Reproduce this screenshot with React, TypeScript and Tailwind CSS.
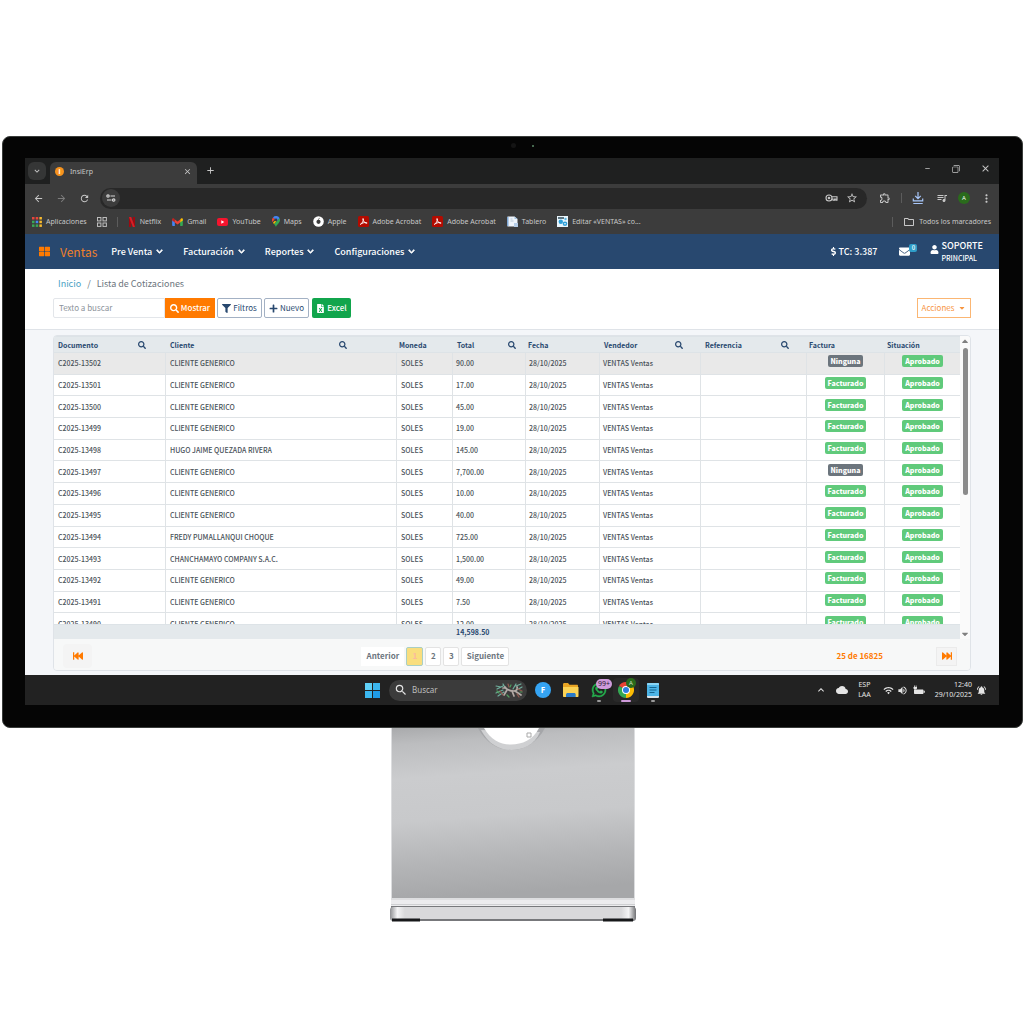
import type { ReactNode } from "react";
import {
  FaSearch,
  FaFilter,
  FaPlus,
  FaFileExcel,
  FaEnvelope,
  FaUser,
  FaDollarSign,
  FaChevronDown,
  FaFastBackward,
  FaFastForward,
  FaThLarge,
  FaCaretDown,
  FaCaretUp,
  FaWhatsapp,
} from "react-icons/fa";
import {
  MdArrowBack,
  MdArrowForward,
  MdRefresh,
  MdStarBorder,
  MdOutlineExtension,
  MdQueueMusic,
  MdMoreVert,
  MdClose,
  MdAdd,
  MdExpandMore,
  MdExpandLess,
  MdMinimize,
  MdWifi,
  MdVolumeUp,
  MdCloud,
  MdNotificationsActive,
  MdOutlineFolder,
  MdSearch,
  MdOutlineFilterNone,
} from "react-icons/md";

const AppsIcon = () => (
  <svg viewBox="0 0 10 10" className="h-[10px] w-[10px]">
    {["#e8453c", "#e8453c", "#f9bb2d", "#3aa757", "#4688f1", "#f9bb2d", "#3aa757", "#3aa757", "#f9bb2d"].map(
      (fill, i) => (
        <rect key={i} x={(i % 3) * 3.700} y={Math.floor(i / 3) * 3.700} width="2.500" height="2.500" fill={fill} />
      )
    )}
  </svg>
);

const GridIcon = () => (
  <svg viewBox="0 0 10 10" className="h-[10px] w-[10px]" fill="none" stroke="#bdbdbd">
    <rect x="0.5" y="0.5" width="3.4" height="3.4" />
    <rect x="6" y="0.5" width="3.4" height="3.4" />
    <rect x="0.5" y="6" width="3.4" height="3.4" />
    <rect x="6" y="6" width="3.4" height="3.4" />
  </svg>
);

const NetflixIcon = () => (
  <svg viewBox="0 0 8 10" className="h-[10px] w-2">
    <path d="M1 0h2.200v10l-2.200.2zM4.800 0H7v10.200L4.800 10z" fill="#9d0a11" />
    <path d="M1 0h2.200L7 10.200 4.800 10z" fill="#d81f26" />
  </svg>
);

const GmailIcon = () => (
  <svg viewBox="0 0 12 9" className="h-2 w-[11px]">
    <path d="M0 1.500v6.700c0 .4.300.8.800.8H3V4z" fill="#4285f4" />
    <path d="M12 1.500v6.700c0 .4-.300.8-.800.8H9V4z" fill="#34a853" />
    <path d="M0 1.300v1.400L3 5V1.700L2 .5C1.200-.1 0 .3 0 1.300z" fill="#c5221f" />
    <path d="M12 1.300v1.400L9 5V1.700L10 .5c.8-.6 2-.2 2 .8z" fill="#fbbc04" />
    <path d="M3 1.700l3 2.300 3-2.300V5L6 7.300 3 5z" fill="#ea4335" />
  </svg>
);

const YoutubeIcon = () => (
  <svg viewBox="0 0 11 8" className="h-2 w-[11px]">
    <rect width="11" height="8" rx="2" fill="#f5142d" />
    <path d="M4.300 2.200v3.600L7.300 4z" fill="#fff" />
  </svg>
);

const MapsIcon = () => (
  <svg viewBox="0 0 8 11" className="h-[11px] w-2">
    <path d="M4 11c0-2 4-4 4-7a4 4 0 0 0-.5-2L2 8c1 1 1.500 2 2 3z" fill="#34a853" />
    <path d="M.500 6L3 3 1 1.400A4 4 0 0 0 .5 6z" fill="#ea4335" />
    <path d="M1 6.800L5.500 2 4 5.600 2 8z" fill="#fbbc04" />
    <path d="M1 1.400A4 4 0 0 1 7.500 2L5 5 3 3z" fill="#4285f4" />
    <circle cx="4" cy="3.900" r="1.400" fill="#3c3c3c" />
  </svg>
);

const AppleIcon = () => (
  <svg viewBox="0 0 11 11" className="h-[11px] w-[11px]">
    <circle cx="5.500" cy="5.500" r="5.300" fill="#fff" />
    <circle cx="5.500" cy="5.800" r="2.100" fill="#3c3c3c" />
    <path d="M5.300 3.800q.2-1.400 1.400-1.500" stroke="#3c3c3c" fill="none" strokeWidth=".7" />
  </svg>
);

const AcrobatIcon = () => (
  <svg viewBox="0 0 11 11" className="h-[11px] w-[11px]">
    <rect width="11" height="11" rx="1.500" fill="#b30b00" />
    <path
      d="M2.300 8.400c1.800-1 3.400-3.600 3.100-5.400-.2-.8-.9-.5-.6.400.5 1.800 1.900 3.500 3.800 4 .8 0 .5-.9-.3-.9-2.200-.100-4 .5-6 1.900z"
      fill="none"
      stroke="#fff"
      strokeWidth=".9"
    />
  </svg>
);

const BoardIcon = () => (
  <svg viewBox="0 0 11 11" className="h-[11px] w-[11px]">
    <path d="M.500.500h7L10.500 3v7.500H.5z" fill="#eef4fb" />
    <path d="M7.500.500V3h3z" fill="#9fbfe0" />
    <path d="M0 1h1.500v9H0z" fill="#7ea6d3" />
    <path d="M3.500 3h2M3.500 5h3" stroke="#a9bccf" strokeWidth=".8" />
    <path d="M7 7h4v4H7z" fill="#b5cde8" />
  </svg>
);

const EditIcon = () => (
  <svg viewBox="0 0 11 11" className="h-[11px] w-[11px]">
    <rect width="11" height="11" fill="#e9f5fc" />
    <path d="M1 1h6v2H1z" fill="#5d7480" />
    <circle cx="3.800" cy="5.800" r="2.200" fill="#2d9fd8" />
    <circle cx="8" cy="7.800" r="2.300" fill="#2d9fd8" />
    <circle cx="8.500" cy="3" r="1.200" fill="#57b5e2" />
    <circle cx="8" cy="7.800" r=".8" fill="#fff" />
  </svg>
);

const TuneIcon = () => (
  <svg viewBox="0 0 10 8" className="h-2 w-[10px]" fill="none" stroke="#d5d5d5" strokeWidth="1.200">
    <circle cx="2" cy="2" r="1.200" />
    <path d="M4.500 2H9M1 6h4.500" />
    <circle cx="7.700" cy="6" r="1.200" />
  </svg>
);

const KeyIcon = () => (
  <svg viewBox="0 0 13 8" className="h-2 w-[13px]" fill="none" stroke="currentColor" strokeWidth="1.100">
    <circle cx="4" cy="4" r="3" />
    <circle cx="4" cy="4" r=".8" fill="currentColor" />
    <path d="M7 2.800h5v3.400h-1.200V5H9.500v1.200H8V5H7" />
  </svg>
);

const DownloadIcon = () => (
  <svg viewBox="0 0 12 14" className="h-[14px] w-3" fill="none" stroke="#a8c7fa" strokeWidth="1.200">
    <path d="M6 1v6.500M3.200 4.800L6 7.600l2.800-2.800M1.300 7.500v2.300h9.400V7.500M1.300 12.500h9.400" />
  </svg>
);

const BatteryIcon = () => (
  <svg viewBox="0 0 12 10" className="h-[10px] w-3" fill="currentColor">
    <path d="M1 4.500h8.500c.6 0 1 .4 1 1V8c0 .6-.4 1-1 1H2c-.6 0-1-.4-1-1zM10.800 5.800h1v2h-1z" />
    <path d="M.500 2h3.500v1.500L3 4.500H1.500L.5 3.500zM1 .500h.8V2H1zM2.700.500h.8V2h-.8z" />
  </svg>
);

const WindowsIcon = () => (
  <svg viewBox="0 0 15 15" className="h-[15px] w-[15px]">
    <path d="M0 0h7v7H0z" fill="#5fd0f7" />
    <path d="M8 0h7v7H8z" fill="#3bb7f0" />
    <path d="M0 8h7v7H0z" fill="#3bb7f0" />
    <path d="M8 8h7v7H8z" fill="#1f9ce8" />
  </svg>
);

const LizardIcon = () => (
  <svg viewBox="0 0 28 16" className="h-4 w-7" fill="none" strokeLinecap="round">
    <path d="M1 4l5 1M2 7l6-3M1 11l7-3M3 14l6-4M8 2l3 5M18 7l3-5M20 9l7-4M21 4l5-2" stroke="#6fae9c" strokeWidth="1.200" />
    <path d="M10 5c2 3 5 4 9 4 2 0 4-2 3-4M12 8l-3 5M17 9l2 5M20 9l6 4M11 6L8 6" stroke="#b3aaa6" strokeWidth="1.700" />
    <path d="M5 9l3 4M23 7l4 2M13 2l1 3M22 12l2 3" stroke="#94594f" strokeWidth="1.200" />
    <path d="M2 9l2 2M12 13l2 2M16 3l-1 2M25 10l2 0" stroke="#4f9e5e" strokeWidth="1.200" />
  </svg>
);

const FolderIcon = () => (
  <svg viewBox="0 0 16 14" className="h-[14px] w-4">
    <path d="M0 1.500C0 .7.500 0 1.300 0H5l1.500 1.800H14c.6 0 1 .5 1 1V12H0z" fill="#e9a524" />
    <path d="M0 4h15.500v9c0 .6-.4 1-1 1H1c-.6 0-1-.4-1-1z" fill="#fbd356" />
    <path d="M3 14v-2.500C3 10.500 4 10 4.700 10h6.300c1 0 1.700.5 1.700 1.500V14z" fill="#2b7bc8" />
  </svg>
);

const ChromeIcon = () => (
  <svg viewBox="0 0 16 16" className="h-4 w-4">
    <path d="M8 8L1.070 4A8 8 0 0 1 14.930 4z" fill="#ea4335" />
    <path d="M8 8L14.930 4A8 8 0 0 1 8 16z" fill="#fbbc04" />
    <path d="M8 8L8 16A8 8 0 0 1 1.070 4z" fill="#34a853" />
    <circle cx="8" cy="8" r="4" fill="#fff" />
    <circle cx="8" cy="8" r="3" fill="#2f7de1" />
  </svg>
);

const NotepadIcon = () => (
  <svg viewBox="0 0 12 15" className="h-[15px] w-3">
    <rect width="12" height="14" rx="1" fill="#4cb4e6" />
    <path d="M0 1a1 1 0 0 1 1-1h10a1 1 0 0 1 1 1v1H0z" fill="#8ad5f5" />
    <path d="M2.500 4.500h7M2.500 7h7M2.500 9.500h5" stroke="#14648f" />
    <path d="M0 13h12v1a1 1 0 0 1-1 1H1a1 1 0 0 1-1-1z" fill="#d8e2e8" />
  </svg>
);

const Stand = () => (
  <svg viewBox="0 0 246 194" className="h-[194px] w-[246px]">
    <defs>
      <linearGradient id="metal" x1="0" y1="0" x2="0.100" y2="1">
        <stop offset="0" stopColor="#a9aaac" />
        <stop offset="0.100" stopColor="#bcbdbf" />
        <stop offset="0.300" stopColor="#cbccce" />
        <stop offset="0.550" stopColor="#c8c9cb" />
        <stop offset="0.800" stopColor="#b4b5b7" />
        <stop offset="1" stopColor="#a6a7a9" />
      </linearGradient>
      <linearGradient id="foot" x1="0" y1="0" x2="1" y2="0">
        <stop offset="0" stopColor="#8f9093" />
        <stop offset="0.030" stopColor="#f4f4f5" />
        <stop offset="0.060" stopColor="#d9d9db" />
        <stop offset="0.940" stopColor="#d9d9db" />
        <stop offset="0.970" stopColor="#f4f4f5" />
        <stop offset="1" stopColor="#6f7073" />
      </linearGradient>
    </defs>
    <path d="M1 0h244v171H1z" fill="url(#metal)" />
    <path d="M1.500 0v171M244.500 0v171" stroke="#dcdddf" />
    <path d="M88 0C96 15 108 22 121 22S147 15 155 0z" fill="#a5a6a9" />
    <path d="M91 2C99 17 110 22 121 22S145 17 150 4z" fill="#cfd0d2" />
    <path d="M94 0C101 12 110 16.500 121 16.500S143 12 149 0z" fill="#fff" />
    <path d="M137 5h4v4h-4z" fill="none" stroke="#a9a9a9" />
    <path d="M1 170h244v8H1z" fill="#ececee" />
    <path d="M1 171h244M1 176.500h244" stroke="#cfd0d2" />
    <path d="M1 178h244v2H1z" fill="#77787b" />
    <rect y="179" width="246" height="14" rx="3" fill="url(#foot)" />
    <path d="M2 192h242" stroke="#77787b" strokeWidth="2" />
    <path d="M2 192h28M213 192h30" stroke="#17181a" strokeWidth="3" />
  </svg>
);

const bookmarks: { label: string; icon: ReactNode }[] = [
  { label: "Netflix", icon: <NetflixIcon /> },
  { label: "Gmail", icon: <GmailIcon /> },
  { label: "YouTube", icon: <YoutubeIcon /> },
  { label: "Maps", icon: <MapsIcon /> },
  { label: "Apple", icon: <AppleIcon /> },
  { label: "Adobe Acrobat", icon: <AcrobatIcon /> },
  { label: "Adobe Acrobat", icon: <AcrobatIcon /> },
  { label: "Tablero", icon: <BoardIcon /> },
  { label: "Editar «VENTAS» co...", icon: <EditIcon /> },
];

const columns = [
  { label: "Documento", width: "w-[112px]", pad: "pl-1 pr-5", search: true },
  { label: "Cliente", width: "", pad: "pl-1 pr-[50px]", search: true },
  { label: "Moneda", width: "w-14", pad: "pl-[2px]", search: false },
  { label: "Total", width: "w-[73px]", pad: "pl-1 pr-[10px]", search: true },
  { label: "Fecha", width: "w-[74px]", pad: "pl-[2px]", search: false },
  { label: "Vendedor", width: "w-[101px]", pad: "pl-1 pr-[18px]", search: true },
  { label: "Referencia", width: "w-[106px]", pad: "pl-1 pr-[18px]", search: true },
  { label: "Factura", width: "w-[78px]", pad: "pl-[2px]", search: false },
  { label: "Situación", width: "w-[75px]", pad: "pl-[2px]", search: false },
];

const rows = [
  ["C2025-13502", "CLIENTE GENERICO", "90.00", "Ninguna"],
  ["C2025-13501", "CLIENTE GENERICO", "17.00", "Facturado"],
  ["C2025-13500", "CLIENTE GENERICO", "45.00", "Facturado"],
  ["C2025-13499", "CLIENTE GENERICO", "19.00", "Facturado"],
  ["C2025-13498", "HUGO JAIME QUEZADA RIVERA", "145.00", "Facturado"],
  ["C2025-13497", "CLIENTE GENERICO", "7,700.00", "Ninguna"],
  ["C2025-13496", "CLIENTE GENERICO", "10.00", "Facturado"],
  ["C2025-13495", "CLIENTE GENERICO", "40.00", "Facturado"],
  ["C2025-13494", "FREDY PUMALLANQUI CHOQUE", "725.00", "Facturado"],
  ["C2025-13493", "CHANCHAMAYO COMPANY S.A.C.", "1,500.00", "Facturado"],
  ["C2025-13492", "CLIENTE GENERICO", "49.00", "Facturado"],
  ["C2025-13491", "CLIENTE GENERICO", "7.50", "Facturado"],
  ["C2025-13490", "CLIENTE GENERICO", "12.00", "Facturado"],
];

const Badge = ({ text }: { text: string }) => (
  <span
    className={`block mx-auto w-fit rounded-[2px] px-[3px] h-3 leading-3 text-[7px] font-black text-white ${
      text === "Ninguna" ? "bg-[#6c757d]" : "bg-[#60ca7b]"
    }`}
  >
    {text}
  </span>
);

const BrowserChrome = () => (
  <div className="bg-[#3c3c3c] text-[#c8c8c8] font-['Noto_Sans',sans-serif] text-[7px] leading-[10px]">
    <div className="flex items-end h-[26px] bg-[#1f2020] pl-[3px]">
      <button aria-label="Buscar pestañas" className="mb-1 flex h-[18px] w-[18px] items-center justify-center rounded-md bg-[#353636]">
        <MdExpandMore size={10} />
      </button>
      <div className="ml-1 flex h-[22px] w-[147px] items-center rounded-t-md bg-[#3c3c3c] px-[5px] pb-[3px]">
        <span className="flex h-[9px] w-[9px] items-center justify-center rounded-full bg-[#f7931e] text-[7px] font-bold text-white">
          i
        </span>
        <span className="ml-[6px] flex-1">InsiErp</span>
        <button aria-label="Cerrar pestaña">
          <MdClose size={9} />
        </button>
      </div>
      <button aria-label="Nueva pestaña" className="mb-2 ml-2">
        <MdAdd size={11} />
      </button>
      <div className="mb-2 ml-auto mr-2 flex items-center gap-5">
        <button aria-label="Minimizar"><MdMinimize size={9} className="mb-[6px]" /></button>
        <button aria-label="Restaurar"><MdOutlineFilterNone size={8} className="rotate-180" /></button>
        <button aria-label="Cerrar"><MdClose size={11} /></button>
      </div>
    </div>
    <div className="flex h-7 items-center pl-2 pr-[6px]">
      <MdArrowBack size={11} />
      <MdArrowForward size={11} className="ml-3 text-[#7d7d7d]" />
      <MdRefresh size={11} className="ml-3" />
      <div className="ml-[10px] flex h-[21px] flex-1 items-center rounded-full bg-[#282828] pl-[2px] pr-[9px]">
        <span className="flex h-[18px] w-[18px] items-center justify-center rounded-full bg-[#3c3c3c]">
          <TuneIcon />
        </span>
        <input aria-label="Dirección" className="min-w-0 flex-1 bg-transparent outline-none" />
        <KeyIcon />
        <MdStarBorder size={12} className="ml-2" />
      </div>
      <MdOutlineExtension size={12} className="ml-3" />
      <span className="ml-[10px] h-[10px] w-px bg-[#5c5c5c]" />
      <span className="ml-[10px]"><DownloadIcon /></span>
      <MdQueueMusic size={12} className="ml-3" />
      <span className="ml-[10px] flex h-3 w-3 items-center justify-center rounded-full bg-[#2a6b1c] text-[6px] text-white">A</span>
      <MdMoreVert size={13} className="ml-[10px]" />
    </div>
    <div className="flex h-[22px] items-center pb-[3px] pl-[7px] pr-2">
      <a href="#" className="flex items-center gap-1">
        <AppsIcon />
        Aplicaciones
      </a>
      <span className="ml-[10px]"><GridIcon /></span>
      <span className="ml-[10px] h-[10px] w-px bg-[#5c5c5c]" />
      <div className="ml-[10px] flex items-center gap-[11px] whitespace-nowrap">
        {bookmarks.map(({ label, icon }, index) => (
          <a key={index} href="#" className="flex items-center gap-1">
            {icon}
            {label}
          </a>
        ))}
      </div>
      <span className="ml-auto h-[10px] w-px bg-[#5c5c5c]" />
      <a href="#" className="ml-[10px] flex items-center gap-1">
        <MdOutlineFolder size={12} />
        Todos los marcadores
      </a>
    </div>
  </div>
);

const Navbar = () => (
  <nav className="flex h-[35px] items-center bg-[#28486f] pl-[14px] pr-4 text-[9px] font-medium text-white">
    <FaThLarge size={11} className="text-[#ff7a00]" />
    <a href="#" className="ml-[10px] text-[12px] font-normal text-[#f0802a]">Ventas</a>
    <div className="ml-[14px] flex gap-5">
      {["Pre Venta", "Facturación", "Reportes", "Configuraciones"].map((item) => (
        <button key={item} className="flex items-center gap-1">
          {item}
          <FaChevronDown size={7} stroke="currentColor" strokeWidth={50} />
        </button>
      ))}
    </div>
    <span className="ml-auto flex items-center">
      <FaDollarSign size={9} />
      TC: 3.387
    </span>
    <a href="#" aria-label="Mensajes" className="ml-[22px] flex">
      <FaEnvelope size={11} />
      <span className="-mt-[2px] -ml-px h-2 w-2 rounded-[2px] bg-[#2f9ec9] text-center text-[6px] leading-2">0</span>
    </a>
    <a href="#" className="ml-[13px] flex items-center gap-[2px]">
      <FaUser size={9} className="mb-1" />
      <span className="leading-[13px]">
        SOPORTE
        <span className="block text-[7px]">PRINCIPAL</span>
      </span>
    </a>
  </nav>
);

const Toolbar = () => (
  <div className="border-b border-[#dfe3e8] bg-white px-7 pt-[9px] pb-[11px]">
    <div className="pl-[5px] text-[9px] leading-3 text-[#6c757d]">
      <a href="#" className="text-[#4a9fc4]">Inicio</a>
      <span className="mx-[6px]">/</span>
      Lista de Cotizaciones
    </div>
    <div className="mt-2 flex h-5 items-stretch text-[8px]">
      <input
        type="text"
        aria-label="Texto a buscar"
        placeholder="Texto a buscar"
        className="w-28 rounded-l-[2px] border border-[#e3e6ea] px-[5px] placeholder:text-[#8c939a] outline-none"
      />
      <button className="flex w-[50px] items-center justify-center gap-[2px] bg-[#ff7a00] font-medium text-white">
        <FaSearch size={9} />
        Mostrar
      </button>
      <button className="ml-[2px] flex w-[45px] items-center justify-center gap-[2px] rounded-[2px] border border-[#a3b1c4] text-[#28486f]">
        <FaFilter size={9} />
        Filtros
      </button>
      <button className="ml-[2px] flex w-[45px] items-center justify-center gap-[2px] rounded-[2px] border border-[#a3b1c4] text-[#28486f]">
        <FaPlus size={9} />
        Nuevo
      </button>
      <button className="ml-[3px] flex w-[39px] items-center justify-center gap-[2px] rounded-[2px] bg-[#11a54c] font-medium text-white">
        <FaFileExcel size={9} />
        Excel
      </button>
      <button className="ml-auto flex w-[54px] items-center justify-center gap-1 border border-[#fbb673] text-[#f7953f]">
        Acciones
        <FaCaretDown size={8} />
      </button>
    </div>
  </div>
);

const QuotesTable = () => (
  <div className="flex">
    <div className="h-[303px] min-w-0 flex-1 overflow-hidden">
      <table className="h-[314px] w-full table-fixed border-separate border-spacing-0 text-left text-[7px] leading-3 font-medium text-[#4a5259]">
        <thead>
          <tr className="h-[17px]">
            {columns.map(({ label, width, pad, search }) => (
              <th key={label} className={`sticky top-0 z-10 border-y border-[#dde3e7] bg-[#e4e9ec] p-0 text-[#28486f] ${width}`}>
                <div className={`flex items-center justify-between ${pad}`}>
                  {label}
                  {search && <FaSearch size={8} />}
                </div>
              </th>
            ))}
          </tr>
        </thead>
        <tbody className="[&_td]:border-b [&_td]:border-[#dfe3e6] [&_td:not(:last-child)]:border-r">
          {rows.map(([doc, client, total, status], index) => (
            <tr key={doc} className={index === 0 ? "bg-[#e9e9e9]" : "bg-white"}>
              <td className="pl-1">{doc}</td>
              <td className="pl-1">{client}</td>
              <td className="pl-1">SOLES</td>
              <td className="pl-[3px]">{total}</td>
              <td className="pl-[3px]">28/10/2025</td>
              <td className="pl-[3px]">VENTAS Ventas</td>
              <td></td>
              <td className="pb-1"><Badge text={status} /></td>
              <td className="pb-1"><Badge text="Aprobado" /></td>
            </tr>
          ))}
        </tbody>
        <tfoot>
          <tr className="h-[15px]">
            <td colSpan={3} className="sticky bottom-0 border-t border-[#dde3e7] bg-[#e4e9ec] p-0"></td>
            <td colSpan={6} className="sticky bottom-0 border-t border-[#dde3e7] bg-[#e4e9ec] p-0 pl-[3px] font-bold text-[#28486f]">
              14,598.50
            </td>
          </tr>
        </tfoot>
      </table>
    </div>
    <div className="flex w-[10px] flex-col items-center bg-[#fafafa] text-[#808080]">
      <FaCaretUp size={10} />
      <span className="mt-[2px] h-[147px] w-[5px] rounded-full bg-[#8a8a8a]" />
      <FaCaretDown size={10} className="mt-auto" />
    </div>
  </div>
);

const pageButton = "h-full rounded-[2px] border border-[#e3e3e3] bg-white text-[#6c757d]";

const Pagination = () => (
  <div className="flex h-[31px] items-center bg-[#f7f8f8] px-[9px] pt-[3px] text-[8px] font-bold">
    <button aria-label="Primera página" className="flex h-6 w-[29px] items-center justify-center rounded bg-[#f4f4f4] text-[#ff7a00]">
      <FaFastBackward size={10} />
    </button>
    <div className="ml-[30%] flex h-[19px] gap-[2px]">
      <button className="h-full w-[43px] bg-white text-[#6c757d]">Anterior</button>
      <button className="h-full w-[17px] rounded-[2px] border border-[#a9cfc4] bg-[#f9de7e] text-[#fbb9a0]">1</button>
      <button className={`w-4 ${pageButton}`}>2</button>
      <button className={`w-4 ${pageButton}`}>3</button>
      <button className={`w-12 ${pageButton}`}>Siguiente</button>
    </div>
    <div className="ml-auto flex items-center gap-[53px] text-[#ff7a00]">
      <span>25 de 16825</span>
      <button aria-label="Última página" className="mr-1 flex h-[19px] w-[21px] items-center justify-center border border-[#ebebeb] bg-[#f4f4f4]">
        <FaFastForward size={10} />
      </button>
    </div>
  </div>
);

const Taskbar = () => (
  <div className="grid h-[30px] grid-cols-[1fr_auto_1fr] items-center bg-[#222222] font-['Noto_Sans',sans-serif] text-[7px] leading-[10px] text-[#e4e4e4]">
    <div className="col-start-2 flex items-center">
      <button aria-label="Inicio"><WindowsIcon /></button>
      <label className="ml-[9px] flex h-[21px] w-[138px] items-center rounded-full bg-[#3b3b3b] pl-[5px] pr-1">
        <MdSearch size={14} />
        <input type="text" aria-label="Buscar" placeholder="Buscar" className="ml-1 min-w-0 flex-1 bg-transparent text-[8px] placeholder:text-[#bdbdbd] outline-none" />
        <LizardIcon />
      </label>
      <button aria-label="F" className="ml-2 h-4 w-4 rounded-full bg-[#35a4f3] text-[8px] font-bold text-white">F</button>
      <button aria-label="Explorador de archivos" className="ml-3"><FolderIcon /></button>
      <button aria-label="WhatsApp" className="relative ml-3">
        <FaWhatsapp size={16} stroke="currentColor" strokeWidth={16} className="text-[#25b24f]" />
        <span className="absolute -top-[3px] left-[5px] rounded-full bg-[#cf9bdb] px-[2px] text-[7px] leading-[10px] text-[#2b2030]">99+</span>
        <span className="absolute -bottom-1 left-[6px] h-[2px] w-1 rounded-full bg-[#9a9a9a]" />
      </button>
      <button aria-label="Chrome" className="relative ml-[6px] rounded-sm bg-[#292929] px-[5px] py-1">
        <ChromeIcon />
        <span className="absolute top-0 right-[3px] h-[10px] w-[10px] rounded-full bg-[#2a6b1c] text-center text-[6px] text-[#d0e0c8]">A</span>
        <span className="absolute bottom-0 left-2 h-[2px] w-[10px] rounded-full bg-[#cf9bdb]" />
      </button>
      <button aria-label="Bloc de notas" className="relative ml-2">
        <NotepadIcon />
        <span className="absolute -bottom-1 left-1 h-[2px] w-1 rounded-full bg-[#9a9a9a]" />
      </button>
    </div>
    <div className="flex items-center justify-end pr-3">
      <MdExpandLess size={12} />
      <MdCloud size={12} className="ml-[9px]" />
      <span className="ml-[10px] text-center">
        ESP
        <br />
        LAA
      </span>
      <MdWifi size={11} className="ml-3" />
      <MdVolumeUp size={11} className="ml-[3px]" />
      <span className="ml-[5px]"><BatteryIcon /></span>
      <span className="ml-[10px] text-right">
        12:40
        <br />
        29/10/2025
      </span>
      <MdNotificationsActive size={11} className="ml-1" />
    </div>
  </div>
);

const App = () => {
  return (
    <main className="min-h-screen bg-white pt-[136px] pl-[2px] pr-px font-['Noto_Sans_CJK_SC','Noto_Sans',sans-serif]">
      <div className="rounded-lg border border-[#3a3d3b] bg-[#050505] pl-[22px] pr-[23px] pb-[22px]">
        <div className="flex h-[21px] items-center justify-center gap-4 pb-1 pl-5">
          <span className="h-[5px] w-[5px] rounded-full bg-[#141414]" />
          <span className="h-[2px] w-[2px] rounded-full bg-[#5c8a68]" />
        </div>
        <BrowserChrome />
        <Navbar />
        <Toolbar />
        <div className="bg-[#f4f6f9] px-7 pt-[5px] pb-1">
          <div className="overflow-hidden rounded border border-[#dfe3e8]">
            <QuotesTable />
            <Pagination />
          </div>
        </div>
        <Taskbar />
      </div>
      <div className="flex justify-center">
        <Stand />
      </div>
    </main>
  );
};

export default App;
